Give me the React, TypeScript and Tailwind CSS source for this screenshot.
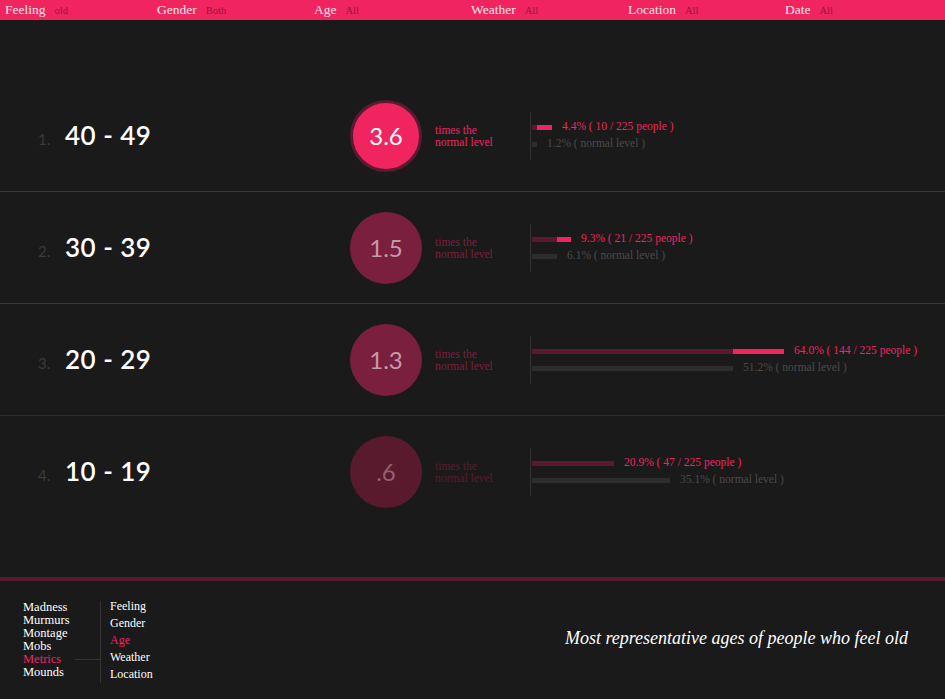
const filters = [
  { label: 'Feeling', value: 'old' },
  { label: 'Gender', value: 'Both' },
  { label: 'Age', value: 'All' },
  { label: 'Weather', value: 'All' },
  { label: 'Location', value: 'All' },
  { label: 'Date', value: 'All' },
]

type Row = {
  rank: number
  ages: string
  ratio: string
  pct: string
  count: number
  normal: string
  base: number
  extra: number
  norm: number
  circle: string
  number: string
  note: string
  ring?: boolean
  border: string
}

const rows: Row[] = [
  {
    rank: 1, ages: '40 - 49', ratio: '3.6', pct: '4.4%', count: 10, normal: '1.2%',
    base: 5, extra: 15, norm: 5,
    circle: 'bg-[#f0245f]', number: 'text-white', note: 'text-[#f0245f]', ring: true,
    border: 'border-[#6e1f3c]',
  },
  {
    rank: 2, ages: '30 - 39', ratio: '1.5', pct: '9.3%', count: 21, normal: '6.1%',
    base: 25, extra: 14, norm: 25,
    circle: 'bg-[#7a1f3d]', number: 'text-[#c49aa9]', note: 'text-[#7a1f3d]',
    border: 'border-[#6e1f3c]',
  },
  {
    rank: 3, ages: '20 - 29', ratio: '1.3', pct: '64.0%', count: 144, normal: '51.2%',
    base: 201, extra: 51, norm: 201,
    circle: 'bg-[#7a1f3d]', number: 'text-[#c49aa9]', note: 'text-[#7a1f3d]',
    border: 'border-[#2c2c2c]',
  },
  {
    rank: 4, ages: '10 - 19', ratio: '.6', pct: '20.9%', count: 47, normal: '35.1%',
    base: 82, extra: 0, norm: 138,
    circle: 'bg-[#5a1a2e]', number: 'text-[#94606f]', note: 'text-[#5a1a2e]',
    border: 'border-transparent',
  },
]

const serif = "font-['Liberation_Serif',serif]"
const sans = "font-['Lato','DejaVu_Sans',sans-serif]"

function AgeRow({ r }: { r: Row }) {
  return (
    <div className={`flex h-[112px] items-center border-b ${r.border}`}>
      <div className="flex w-[350px] items-baseline pl-[38px]">
        <span className={`w-[27px] text-[15px] text-[#3a3a3a] ${sans}`}>{r.rank}.</span>
        <span className={`text-[26px] font-semibold tracking-[0.5px] text-white ${sans}`}>{r.ages}</span>
      </div>
      <div
        className={`flex h-[72px] w-[72px] items-center justify-center rounded-full ${r.circle} ${
          r.ring ? 'border-[3px] border-[#5a1a30]' : ''
        }`}
      >
        <span className={`text-[24px] ${r.number} ${sans}`}>{r.ratio}</span>
      </div>
      <div className={`ml-[13px] w-[95px] text-[11.5px] leading-[12px] ${r.note} ${serif}`}>
        <div>times the</div>
        <div>normal level</div>
      </div>
      <div className="h-[48px] w-px bg-[#333]" />
      <div className={`ml-px flex flex-col text-[11.5px] ${serif}`}>
        <div className="flex h-[17px] items-center">
          <div className="h-[5px] bg-[#5a1a2e]" style={{ width: r.base }} />
          {r.extra > 0 && <div className="h-[5px] bg-[#f0245f]" style={{ width: r.extra }} />}
          <span className="ml-[10px] text-[#f0245f]">
            {r.pct} ( {r.count} / 225 people )
          </span>
        </div>
        <div className="flex h-[17px] items-center">
          <div className="h-[5px] bg-[#2d2d2d]" style={{ width: r.norm }} />
          <span className="ml-[10px] text-[#4a4a4a]">{r.normal} ( normal level )</span>
        </div>
      </div>
    </div>
  )
}

export default function App() {
  return (
    <div className={`flex h-[699px] w-[945px] flex-col overflow-hidden bg-[#1a1a1a] ${serif}`}>
      <div className="grid h-[20px] grid-cols-[repeat(6,157px)] bg-[#f0245f]">
        {filters.map((f, i) => (
          <div key={f.label} className={`flex items-baseline leading-[19px] ${i === 0 ? 'pl-[5px]' : ''}`}>
            <span className="text-[13.5px] text-[#fde4ec]">{f.label}</span>
            <span className="ml-[9px] text-[10.5px] text-[#951840]">{f.value}</span>
          </div>
        ))}
      </div>

      <div className="mt-[60px] flex flex-col">
        {rows.map((r) => (
          <AgeRow key={r.rank} r={r} />
        ))}
      </div>

      <div className="mt-auto flex h-[122px] items-center justify-between border-t-4 border-[#5a1a2e] pl-[23px] pr-[37px]">
        <div className="flex items-stretch pt-[4px]">
          <div className="relative w-[77px] text-[12.5px] leading-[13px] text-white">
            <div>Madness</div>
            <div>Murmurs</div>
            <div>Montage</div>
            <div>Mobs</div>
            <div className="text-[#f0245f]">Metrics</div>
            <div>Mounds</div>
            <div className="absolute right-0 top-[58px] h-px w-[25px] bg-[#333]" />
          </div>
          <div className="w-px bg-[#333]" />
          <div className="-mt-[3px] pl-[9px] text-[12px] leading-[17px] text-white">
            <div>Feeling</div>
            <div>Gender</div>
            <div className="text-[#f0245f]">Age</div>
            <div>Weather</div>
            <div>Location</div>
          </div>
        </div>
        <div className="mb-[4px] text-[18px] italic text-white">
          Most representative ages of people who feel old
        </div>
      </div>
    </div>
  )
}
